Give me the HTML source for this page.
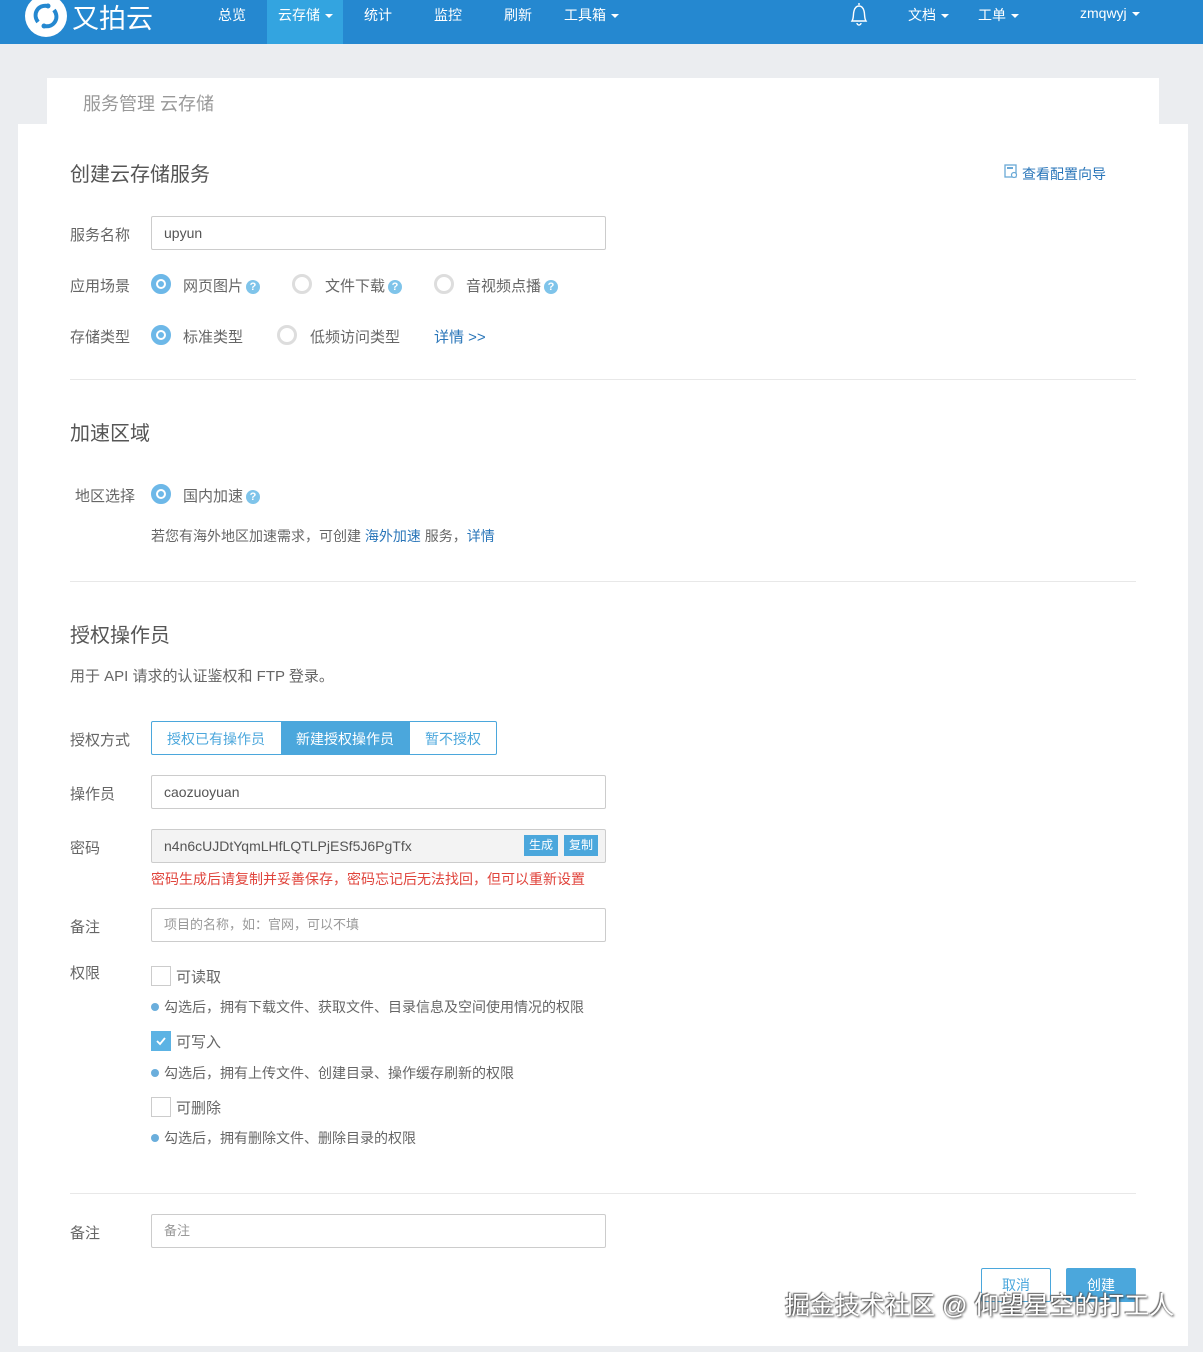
<!DOCTYPE html>
<html><head><meta charset="utf-8"><style>
*{margin:0;padding:0;box-sizing:border-box}
body{width:1203px;height:1352px;background:#ebedf0;position:relative;overflow:hidden;font-family:"Liberation Sans","Noto Sans CJK SC",sans-serif;color:#666;font-size:15px}
.a{position:absolute;white-space:nowrap}
.nav{position:absolute;left:0;top:0;width:1203px;height:44px;background:#2588d0}
.nav .a{color:#fff;font-size:14px;top:5px}
.car{display:inline-block;width:0;height:0;border-left:4px solid transparent;border-right:4px solid transparent;border-top:4px solid #fff;vertical-align:middle;margin-left:5px}
.card{position:absolute;left:18px;top:124px;width:1170px;height:1222px;background:#fff}
.lbl{font-size:15px;color:#666}
.inp{position:absolute;left:151px;width:455px;height:34px;border:1px solid #ccc;border-radius:2px;background:#fff;padding-left:12px;line-height:32px;font-size:14px;color:#555}
.r{position:absolute;width:20px;height:20px;border-radius:50%}
.ron{border:5px solid #6db8e8;background:#fff}
.ron:after{content:"";position:absolute;left:2px;top:2px;width:6px;height:6px;border-radius:50%;background:#6db8e8}
.roff{border:3px solid #ddd;background:#fff}
.q{display:inline-block;width:14px;height:14px;border-radius:50%;background:#7fc4ea;color:#fff;font-size:11px;line-height:14px;text-align:center;font-weight:bold;vertical-align:1px;margin-left:3px}
.hr{position:absolute;left:70px;width:1066px;height:1px;background:#e8e8e8}
.h{font-size:20px;color:#555}
.blue{color:#2a76b9}
.cb{position:absolute;left:151px;width:20px;height:20px;border:1px solid #ccc;background:#fff}
.dot{display:inline-block;width:8px;height:8px;border-radius:50%;background:#6aaedc;margin-right:5px;vertical-align:1px}
.sm{font-size:14px;color:#666}
</style></head><body>
<div class="nav">
  <svg class="a" style="left:24px;top:-6px" width="44" height="44" viewBox="0 0 44 44"><circle cx="22" cy="22" r="21" fill="#fff"/><path d="M14 28 C8 20 14 10 24 12 M30 16 C36 24 30 34 20 32" stroke="#2588d0" stroke-width="4" fill="none"/><circle cx="24" cy="12" r="2.5" fill="#2588d0"/><circle cx="20" cy="32" r="2.5" fill="#2588d0"/></svg>
  <div class="a" style="left:72px;top:-3px;font-size:27px">又拍云</div>
  <div class="a" style="left:218px">总览</div>
  <div class="a" style="left:267px;top:0;width:76px;height:44px;background:#33a4e0"></div>
  <div class="a" style="left:278px">云存储<span class="car"></span></div>
  <div class="a" style="left:364px">统计</div>
  <div class="a" style="left:434px">监控</div>
  <div class="a" style="left:504px">刷新</div>
  <div class="a" style="left:564px">工具箱<span class="car"></span></div>
  <svg class="a" style="left:847px;top:1px" width="24" height="27" viewBox="0 0 24 27"><path d="M12 2 v2 M5 20 C7 17 6 13 7 10 C8 6 10 5 12 5 C14 5 16 6 17 10 C18 13 17 17 19 20 Z M10 22 a2 2 0 0 0 4 0" stroke="#fff" stroke-width="1.4" fill="none"/></svg>
  <div class="a" style="left:908px">文档<span class="car"></span></div>
  <div class="a" style="left:978px">工单<span class="car"></span></div>
  <div class="a" style="left:1080px">zmqwyj<span class="car"></span></div>
</div>
<div class="a" style="left:47px;top:78px;width:1112px;height:46px;background:#fff"></div>
<div class="a" style="left:83px;top:90px;font-size:18px;color:#999">服务管理 云存储</div>
<div class="card"></div>

<div class="a h" style="left:70px;top:158px">创建云存储服务</div>
<svg class="a" style="left:1004px;top:164px" width="14" height="15" viewBox="0 0 14 15"><rect x="1" y="1" width="11" height="12" fill="none" stroke="#6aa9d6" stroke-width="1.3"/><rect x="3" y="3" width="6" height="2" fill="#6aa9d6"/><circle cx="10" cy="11" r="2.5" fill="#fff" stroke="#6aa9d6" stroke-width="1.2"/></svg>
<div class="a blue" style="left:1022px;top:164px;font-size:14px">查看配置向导</div>

<div class="a lbl" style="left:70px;top:224px">服务名称</div>
<div class="inp" style="top:216px">upyun</div>

<div class="a lbl" style="left:70px;top:275px">应用场景</div>
<div class="r ron" style="left:151px;top:274px"></div><div class="a" style="left:183px;top:275px">网页图片<span class="q">?</span></div>
<div class="r roff" style="left:292px;top:274px"></div><div class="a" style="left:325px;top:275px">文件下载<span class="q">?</span></div>
<div class="r roff" style="left:434px;top:274px"></div><div class="a" style="left:466px;top:275px">音视频点播<span class="q">?</span></div>

<div class="a lbl" style="left:70px;top:326px">存储类型</div>
<div class="r ron" style="left:151px;top:325px"></div><div class="a" style="left:183px;top:326px">标准类型</div>
<div class="r roff" style="left:277px;top:325px"></div><div class="a" style="left:310px;top:326px">低频访问类型</div>
<div class="a blue" style="left:434px;top:326px">详情 &gt;&gt;</div>
<div class="hr" style="top:379px"></div>

<div class="a h" style="left:70px;top:417px">加速区域</div>
<div class="a lbl" style="left:75px;top:485px">地区选择</div>
<div class="r ron" style="left:151px;top:484px"></div><div class="a" style="left:183px;top:485px">国内加速<span class="q">?</span></div>
<div class="a sm" style="left:151px;top:526px">若您有海外地区加速需求，可创建 <span class="blue">海外加速</span> 服务，<span class="blue">详情</span></div>
<div class="hr" style="top:581px"></div>

<div class="a h" style="left:70px;top:619px">授权操作员</div>
<div class="a" style="left:70px;top:665px">用于 API 请求的认证鉴权和 FTP 登录。</div>

<div class="a lbl" style="left:70px;top:729px">授权方式</div>
<div class="a" style="left:151px;top:721px;width:346px;height:34px;border:1px solid #4ba7dc;border-radius:2px;font-size:14px;color:#4ba7dc">
  <div class="a" style="left:15px;top:7px">授权已有操作员</div>
  <div class="a" style="left:129px;top:0;width:129px;height:32px;background:#4ba7dc"></div>
  <div class="a" style="left:144px;top:7px;color:#fff">新建授权操作员</div>
  <div class="a" style="left:273px;top:7px">暂不授权</div>
</div>

<div class="a lbl" style="left:70px;top:783px">操作员</div>
<div class="inp" style="top:775px">caozuoyuan</div>
<div class="a lbl" style="left:70px;top:837px">密码</div>
<div class="inp" style="top:829px;background:#f3f3f3">n4n6cUJDtYqmLHfLQTLPjESf5J6PgTfx</div>
<div class="a" style="left:524px;top:835px;width:34px;height:21px;background:#4ba7dc;color:#fff;font-size:12px;line-height:21px;text-align:center">生成</div>
<div class="a" style="left:564px;top:835px;width:34px;height:21px;background:#4ba7dc;color:#fff;font-size:12px;line-height:21px;text-align:center">复制</div>
<div class="a" style="left:151px;top:869px;color:#e0443c;font-size:14px">密码生成后请复制并妥善保存，密码忘记后无法找回，但可以重新设置</div>

<div class="a lbl" style="left:70px;top:916px">备注</div>
<div class="inp" style="top:908px;color:#999;font-size:13px">项目的名称，如：官网，可以不填</div>

<div class="a lbl" style="left:70px;top:962px">权限</div>
<div class="cb" style="top:966px"></div><div class="a" style="left:176px;top:966px">可读取</div>
<div class="a sm" style="left:151px;top:997px"><span class="dot"></span>勾选后，拥有下载文件、获取文件、目录信息及空间使用情况的权限</div>
<div class="cb" style="top:1031px;background:#5cb3e4;border-color:#5cb3e4"><svg width="18" height="18" viewBox="0 0 18 18"><path d="M5 9 l3 3 l5 -6" stroke="#fff" stroke-width="1.8" fill="none"/></svg></div><div class="a" style="left:176px;top:1031px">可写入</div>
<div class="a sm" style="left:151px;top:1063px"><span class="dot"></span>勾选后，拥有上传文件、创建目录、操作缓存刷新的权限</div>
<div class="cb" style="top:1097px"></div><div class="a" style="left:176px;top:1097px">可删除</div>
<div class="a sm" style="left:151px;top:1128px"><span class="dot"></span>勾选后，拥有删除文件、删除目录的权限</div>
<div class="hr" style="top:1193px"></div>

<div class="a lbl" style="left:70px;top:1222px">备注</div>
<div class="inp" style="top:1214px;color:#999;font-size:13px">备注</div>

<div class="a" style="left:981px;top:1268px;width:70px;height:34px;border:1px solid #4ba7dc;border-radius:2px;color:#4ba7dc;text-align:center;line-height:32px;font-size:14px">取消</div>
<div class="a" style="left:1066px;top:1268px;width:70px;height:34px;background:#4ba7dc;border-radius:2px;color:#fff;text-align:center;line-height:34px;font-size:14px">创建</div>
<div class="a" style="left:785px;top:1286px;font-size:25px;color:#fff;text-shadow:1px 1px 2px #333,-1px -1px 1px #666">掘金技术社区 @ 仰望星空的打工人</div>
</body></html>
